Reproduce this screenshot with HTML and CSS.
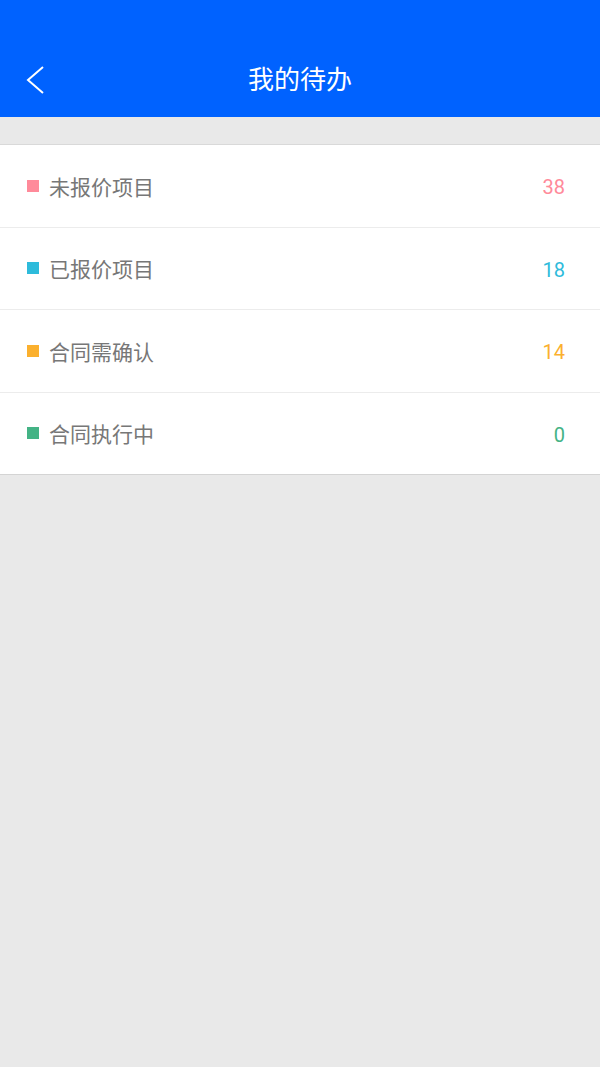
FILE: index.html
```html
<!DOCTYPE html>
<html lang="zh">
<head>
  <meta charset="UTF-8">
  <title>我的待办</title>
  <link rel="stylesheet" href="styles.css">
</head>
<body>
  <header class="topbar">
    <a class="back" href="#">
      <svg width="22" height="30" viewBox="0 0 22 30"><polyline points="19,2 4,15 19,28" fill="none" stroke="#fff" stroke-width="2"/></svg>
    </a>
    <h1>我的待办</h1>
  </header>

  <div class="list">
    <div class="row"><span class="dot pink"></span><span class="label">未报价项目</span><span class="num pink-t">38</span></div>
    <div class="row"><span class="dot cyan"></span><span class="label">已报价项目</span><span class="num cyan-t">18</span></div>
    <div class="row"><span class="dot orange"></span><span class="label">合同需确认</span><span class="num orange-t">14</span></div>
    <div class="row"><span class="dot green"></span><span class="label">合同执行中</span><span class="num green-t">0</span></div>
  </div>
</body>
</html>
```

FILE: styles.css
```css
body { margin: 0; background: #e9e9e9; font-family: Roboto, "Noto Sans CJK SC", sans-serif; min-height: 1067px; }
.topbar { height: 117px; background: #0062ff; position: relative; display: flex; align-items: flex-end; justify-content: center; }
.topbar h1 { margin: 0; height: 74px; line-height: 74px; color: #fff; font-size: 26px; font-weight: normal; }
.back { position: absolute; left: 24px; top: 65px; }
.list { margin-top: 27px; background: #fff; border-top: 1px solid #d9d9d9; border-bottom: 1px solid #d4d4d4; }
.row { height: 81.5px; display: flex; align-items: center; padding: 0 35px 0 27px; border-top: 1px solid #ececec; }
.row:first-child { border-top: none; }
.dot { width: 12px; height: 12px; margin-right: 10px; }
.label { flex: 1; font-size: 21px; color: #777; }
.num { font-size: 20px; padding-top: 3px; }
.pink { background: #ff8a9a; } .pink-t { color: #ff8a9a; }
.cyan { background: #2ebbdb; } .cyan-t { color: #2ebbdb; }
.orange { background: #fbb02e; } .orange-t { color: #fbb02e; }
.green { background: #44b385; } .green-t { color: #44b385; }
```
